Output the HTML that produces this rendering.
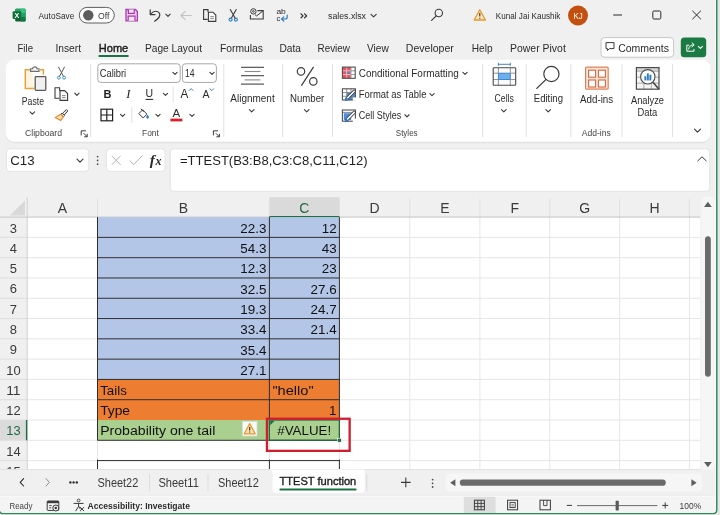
<!DOCTYPE html>
<html lang="en"><head><meta charset="utf-8"><title>sales.xlsx - Excel</title>
<style>html,body{margin:0;padding:0;background:#f0f0f0;overflow:hidden}body{width:720px;height:515px;position:relative;font-family:"Liberation Sans", sans-serif}svg{display:block;position:absolute;left:0;top:0;will-change:transform}text{font-family:"Liberation Sans", sans-serif;white-space:pre}</style>
</head><body>
<svg width="720" height="515" viewBox="0 0 720 515">
<rect x="0" y="0" width="720" height="515" fill="#f0f0f0"/>
<g id="titlebar">
<rect x="15.2" y="8.8" width="10.4" height="12.6" fill="#185c37" rx="1.2"/>
<rect x="15.2" y="8.8" width="10.4" height="4.4" fill="#21a366" rx="1.2"/>
<rect x="20.4" y="8.8" width="5.2" height="4.2" fill="#33c481" rx="1"/>
<rect x="20.4" y="13" width="5.2" height="4.2" fill="#21a366"/>
<rect x="15.2" y="13" width="5.2" height="4.2" fill="#107c41"/>
<rect x="20.4" y="17.2" width="5.2" height="4.2" fill="#107c41" rx="0.8"/>
<rect x="12.6" y="11.2" width="8.6" height="7.8" fill="#0f6e3a" rx="1"/>
<text x="16.9" y="17.7" font-size="7.2" fill="#fff" font-weight="bold" text-anchor="middle">X</text>
<text x="38.5" y="18.7" font-size="9" fill="#2b2b2b" textLength="35.8" lengthAdjust="spacingAndGlyphs">AutoSave</text>
<rect x="79.3" y="7.4" width="35" height="15.6" fill="#fdfdfd" rx="7.8" stroke="#5f5f5f" stroke-width="1"/>
<circle cx="88.3" cy="15.2" r="5.2" fill="#5d5d5d"/>
<text x="98" y="18.5" font-size="9" fill="#3a3a3a" textLength="11.4" lengthAdjust="spacingAndGlyphs">Off</text>
<path d="M126 9.5 h9.4 l2 2 v9.3 h-11.4 z" stroke="#a83cae" stroke-width="1.3" fill="#edc6ef" />
<path d="M128.4 9.5 v3.8 h5.8 v-3.8" stroke="#a83cae" stroke-width="1.2" fill="#f6e4f7" />
<path d="M128.2 20.8 v-4.6 h6.8 v4.6" stroke="#a83cae" stroke-width="1.2" fill="#f6e4f7" />
<path d="M150.2 9.8 v4.8 h4.8" stroke="#3b3b3b" stroke-width="1.2" fill="none" stroke-linecap="round" stroke-linejoin="round"/>
<path d="M150.6 14.3 C153 10.5 158 10.2 159.6 13.6 C160.6 16.2 158.5 18.6 154.6 21.2" stroke="#3b3b3b" stroke-width="1.2" fill="none" stroke-linecap="round"/>
<path d="M165.8 14.200000000000001 L168 16.400000000000002 L170.2 14.200000000000001" stroke="#3b3b3b" stroke-width="1.1" fill="none" stroke-linecap="round" stroke-linejoin="round"/>
<path d="M181 15.5 h10.5 M185.2 11.3 l-4.2 4.2 l4.2 4.2" stroke="#c2c2c2" stroke-width="1.1" fill="none" stroke-linecap="round" stroke-linejoin="round"/>
<path d="M208 12 v-2.4 h-4.4 v9.8 h4" stroke="#3b3b3b" stroke-width="1.1" fill="none" />
<path d="M208.4 12.2 h4.6 l2.8 2.8 v6.4 h-7.4 z" stroke="#3b3b3b" stroke-width="1.1" fill="#fafafa" />
<path d="M210.3 16.6 h3.6 M210.3 18.6 h3.6" stroke="#6a6a6a" stroke-width="0.8" fill="none" />
<path d="M230.3 9.5 L235.2 18.2 M236.2 9.5 L231.3 18.2" stroke="#3b3b3b" stroke-width="1.1" fill="none" stroke-linecap="round"/>
<circle cx="230.6" cy="19.6" r="1.5" fill="none" stroke="#2e7cc0" stroke-width="1.1"/>
<circle cx="235.9" cy="19.6" r="1.5" fill="none" stroke="#2e7cc0" stroke-width="1.1"/>
<path d="M257.4 10.6 h5.8 v8.4 h-12.8 v-4" stroke="#3b3b3b" stroke-width="1.1" fill="none" />
<path d="M263 10.9 l-6.4 5 l-1.6 -1.2" stroke="#3b3b3b" stroke-width="1" fill="none" />
<circle cx="253.4" cy="11.4" r="2.7" fill="none" stroke="#2b2b2b" stroke-width="0.9"/>
<circle cx="253.4" cy="11.4" r="0.9" fill="none" stroke="#2b2b2b" stroke-width="0.8"/>
<text x="276.4" y="14.4" font-size="7.8" fill="#2b2b2b" textLength="9.4" lengthAdjust="spacingAndGlyphs">ab</text>
<text x="276.4" y="21" font-size="7.8" fill="#2b2b2b">c</text>
<path d="M287.2 15.2 v1.8 q0 2 -2 2 h-3.2 M283.8 16.8 l-2.2 2.2 l2.2 2.2" stroke="#2e7cc0" stroke-width="1.2" fill="none" stroke-linecap="round" stroke-linejoin="round"/>
<path d="M301 13.9 l2 2 l-2 2 M304.6 13.9 l2 2 l-2 2" stroke="#2b2b2b" stroke-width="1.3" fill="none" stroke-linecap="round" stroke-linejoin="round"/>
<text x="328" y="18.7" font-size="9.2" fill="#2b2b2b" textLength="38" lengthAdjust="spacingAndGlyphs">sales.xlsx</text>
<path d="M371.0 14.299999999999999 L373.6 16.9 L376.20000000000005 14.299999999999999" stroke="#3b3b3b" stroke-width="1.1" fill="none" stroke-linecap="round" stroke-linejoin="round"/>
<circle cx="438.8" cy="13" r="3.7" fill="none" stroke="#3b3b3b" stroke-width="1.1"/>
<line x1="436.2" y1="15.8" x2="431.6" y2="20.4" stroke="#3b3b3b" stroke-width="1.2" stroke-linecap="round"/>
<path d="M479.8 9.8 L485.4 20 H474.2 Z" stroke="#e8972a" stroke-width="1.3" fill="#fde9c8" stroke-linejoin="round"/>
<path d="M479.8 13 v3.6 M479.8 17.8 v1" stroke="#3b2a10" stroke-width="1.1" fill="none" />
<text x="495.8" y="18.7" font-size="9" fill="#2b2b2b" textLength="64.6" lengthAdjust="spacingAndGlyphs">Kunal Jai Kaushik</text>
<circle cx="578" cy="15.5" r="10" fill="#c4500f"/>
<text x="578" y="18.8" font-size="9" fill="#fff" textLength="9.2" lengthAdjust="spacingAndGlyphs" text-anchor="middle">KJ</text>
<line x1="613.2" y1="15" x2="622" y2="15" stroke="#2b2b2b" stroke-width="1" />
<rect x="652.8" y="11" width="8" height="8" fill="none" rx="1.2" stroke="#2b2b2b" stroke-width="1"/>
<path d="M692.6 11 l8 8 M700.6 11 l-8 8" stroke="#2b2b2b" stroke-width="1" fill="none" stroke-linecap="round"/>
</g>
<g id="ribbon-tabs">
<text x="17.5" y="51.8" font-size="11" fill="#2b2b2b" textLength="15.5" lengthAdjust="spacingAndGlyphs">File</text>
<text x="55.5" y="51.8" font-size="11" fill="#2b2b2b" textLength="25.5" lengthAdjust="spacingAndGlyphs">Insert</text>
<text x="98.8" y="51.8" font-size="11" fill="#1a1a1a" textLength="29.4" lengthAdjust="spacingAndGlyphs" stroke="#1a1a1a" stroke-width="0.4">Home</text>
<rect x="98.4" y="55" width="30.4" height="1.9" fill="#1e7145" rx="0.9"/>
<text x="145" y="51.8" font-size="11" fill="#2b2b2b" textLength="57" lengthAdjust="spacingAndGlyphs">Page Layout</text>
<text x="220" y="51.8" font-size="11" fill="#2b2b2b" textLength="43" lengthAdjust="spacingAndGlyphs">Formulas</text>
<text x="279.5" y="51.8" font-size="11" fill="#2b2b2b" textLength="21.5" lengthAdjust="spacingAndGlyphs">Data</text>
<text x="317.5" y="51.8" font-size="11" fill="#2b2b2b" textLength="32.5" lengthAdjust="spacingAndGlyphs">Review</text>
<text x="367" y="51.8" font-size="11" fill="#2b2b2b" textLength="21.8" lengthAdjust="spacingAndGlyphs">View</text>
<text x="405.8" y="51.8" font-size="11" fill="#2b2b2b" textLength="48" lengthAdjust="spacingAndGlyphs">Developer</text>
<text x="471.8" y="51.8" font-size="11" fill="#2b2b2b" textLength="20.8" lengthAdjust="spacingAndGlyphs">Help</text>
<text x="510" y="51.8" font-size="11" fill="#2b2b2b" textLength="55.8" lengthAdjust="spacingAndGlyphs">Power Pivot</text>
<rect x="601" y="37.6" width="72.6" height="19.6" fill="#ffffff" rx="3.5" stroke="#c6c6c6" stroke-width="1"/>
<path d="M606 42.6 h8 v6 h-4.6 l-2 2 v-2 h-1.4 z" stroke="#3b3b3b" stroke-width="1" fill="none" stroke-linejoin="round"/>
<text x="618.2" y="51.8" font-size="11" fill="#2b2b2b" textLength="50.8" lengthAdjust="spacingAndGlyphs">Comments</text>
<rect x="680.8" y="37.4" width="25.4" height="19.8" fill="#1b7a43" rx="3.5"/>
<path d="M689.2 45.2 h-2.4 v6 h7.2 v-2.2" stroke="#fff" stroke-width="1" fill="none" />
<path d="M688.6 49 c0.6 -3 2.6 -4.2 5 -4.2 M692 42.8 l2.2 2 l-2.2 2" stroke="#fff" stroke-width="1" fill="none" stroke-linecap="round" stroke-linejoin="round"/>
<path d="M698.3 46.35 L700.4 48.449999999999996 L702.5 46.35" stroke="#fff" stroke-width="1.1" fill="none" stroke-linecap="round" stroke-linejoin="round"/>
</g>
<g id="ribbon">
<rect x="6" y="60.6" width="704.4" height="82.6" fill="#e2e2e2" rx="8"/>
<rect x="6" y="59.8" width="704.4" height="82" fill="#ffffff" rx="8"/>
<line x1="90.5" y1="64" x2="90.5" y2="137" stroke="#e2e2e2" stroke-width="1" />
<line x1="223.8" y1="64" x2="223.8" y2="137" stroke="#e2e2e2" stroke-width="1" />
<line x1="282.5" y1="64" x2="282.5" y2="137" stroke="#e2e2e2" stroke-width="1" />
<line x1="332.5" y1="64" x2="332.5" y2="137" stroke="#e2e2e2" stroke-width="1" />
<line x1="482.5" y1="64" x2="482.5" y2="137" stroke="#e2e2e2" stroke-width="1" />
<line x1="526.2" y1="64" x2="526.2" y2="137" stroke="#e2e2e2" stroke-width="1" />
<line x1="570.8" y1="64" x2="570.8" y2="137" stroke="#e2e2e2" stroke-width="1" />
<line x1="622" y1="64" x2="622" y2="137" stroke="#e2e2e2" stroke-width="1" />
<line x1="672.5" y1="64" x2="672.5" y2="137" stroke="#e2e2e2" stroke-width="1" />
<path d="M31.5 69.8 h-6.2 v18.6 h9" stroke="#e8a33a" stroke-width="1.5" fill="#fdf3e1" />
<path d="M40 69.8 h3.4 v5" stroke="#e8a33a" stroke-width="1.5" fill="none" />
<path d="M30.6 71.4 v-2.6 h2 c0 -2.6 4.4 -2.6 4.4 0 h2 v2.6 z" stroke="#6e6e6e" stroke-width="1.1" fill="#f4f4f4" />
<rect x="35.2" y="76.6" width="10.6" height="13.8" fill="#f0f0f0" rx="0.8" stroke="#5a5a5a" stroke-width="1.3"/>
<text x="21.8" y="104.5" font-size="10" fill="#2b2b2b" textLength="22.2" lengthAdjust="spacingAndGlyphs">Paste</text>
<path d="M29.999999999999996 111.85 L32.3 114.15 L34.599999999999994 111.85" stroke="#3b3b3b" stroke-width="1.1" fill="none" stroke-linecap="round" stroke-linejoin="round"/>
<path d="M58.6 67.2 L63.6 76.6 M64.4 67.2 L59.4 76.6" stroke="#555" stroke-width="1" fill="none" stroke-linecap="round"/>
<circle cx="58.9" cy="77.7" r="1.4" fill="none" stroke="#3a96dd" stroke-width="1"/>
<circle cx="64.1" cy="77.7" r="1.4" fill="none" stroke="#3a96dd" stroke-width="1"/>
<path d="M59.6 90.4 v-2.6 h-4.6 v10.4 h4.2" stroke="#3b3b3b" stroke-width="1.1" fill="none" />
<path d="M60 90.6 h4.6 l3 3 v6.8 h-7.6 z" stroke="#3b3b3b" stroke-width="1.1" fill="#fafafa" />
<path d="M62 95.6 h3.6 M62 97.6 h3.6" stroke="#6a6a6a" stroke-width="0.8" fill="none" />
<path d="M74.7 93.10000000000001 L76.9 95.3 L79.10000000000001 93.10000000000001" stroke="#3b3b3b" stroke-width="1.1" fill="none" stroke-linecap="round" stroke-linejoin="round"/>
<path d="M66.4 109.6 l1.4 1.4 l-3.6 4 l-1.8 -1.6 z" stroke="#3b3b3b" stroke-width="1" fill="#f4f4f4" stroke-linejoin="round"/>
<path d="M62 113 l2.6 2.6 l-1.2 1.2 l-2.6 -2.6 z" stroke="#3b3b3b" stroke-width="0.9" fill="#f4f4f4" />
<path d="M60.6 114.2 l2.8 2.8 l-2.6 3.4 l-5.6 -3 z" stroke="#e08a2a" stroke-width="1.1" fill="#f9dcb4" stroke-linejoin="round"/>
<text x="25" y="136.3" font-size="9.3" fill="#444444" textLength="37" lengthAdjust="spacingAndGlyphs">Clipboard</text>
<path d="M81.2 135.4 v-4.6 h4.6" stroke="#3a3a3a" stroke-width="1" fill="none" />
<path d="M83.60000000000001 133.20000000000002 l3.6 3.6 M87.2 133.8 v3 h-3" stroke="#3a3a3a" stroke-width="1" fill="none" />
<rect x="97.8" y="63.8" width="82.4" height="18.6" fill="#ffffff" rx="3" stroke="#a8a8a8" stroke-width="1"/>
<rect x="182.4" y="63.8" width="34" height="18.6" fill="#ffffff" rx="3" stroke="#a8a8a8" stroke-width="1"/>
<text x="99.8" y="76.9" font-size="10.6" fill="#2b2b2b" textLength="26.4" lengthAdjust="spacingAndGlyphs">Calibri</text>
<path d="M172.9 72.35000000000001 L175 74.45 L177.1 72.35000000000001" stroke="#3b3b3b" stroke-width="1.1" fill="none" stroke-linecap="round" stroke-linejoin="round"/>
<text x="185" y="76.9" font-size="10.6" fill="#2b2b2b" textLength="9.6" lengthAdjust="spacingAndGlyphs">14</text>
<path d="M209.9 72.35000000000001 L212 74.45 L214.1 72.35000000000001" stroke="#3b3b3b" stroke-width="1.1" fill="none" stroke-linecap="round" stroke-linejoin="round"/>
<text x="107.5" y="98" font-size="11" fill="#1f1f1f" font-weight="bold" text-anchor="middle">B</text>
<text x="128.4" y="98.2" font-size="12.6" fill="#1f1f1f" text-anchor="middle" font-style="italic" style="font-family:'Liberation Serif',serif">I</text>
<text x="149.4" y="97.4" font-size="10.5" fill="#1f1f1f" text-anchor="middle">U</text>
<line x1="145.6" y1="99.4" x2="153.2" y2="99.4" stroke="#1f1f1f" stroke-width="1" />
<path d="M163.4 93.35000000000001 L165.5 95.45 L167.6 93.35000000000001" stroke="#3b3b3b" stroke-width="1.1" fill="none" stroke-linecap="round" stroke-linejoin="round"/>
<line x1="173.2" y1="87" x2="173.2" y2="102" stroke="#e2e2e2" stroke-width="1" />
<text x="184.4" y="98" font-size="13.4" fill="#2b2b2b" textLength="7.8" lengthAdjust="spacingAndGlyphs" text-anchor="middle">A</text>
<path d="M189.4 90.4 l1.8 -1.8 l1.8 1.8" stroke="#2e7cc0" stroke-width="1" fill="none" stroke-linecap="round" stroke-linejoin="round"/>
<text x="206" y="98" font-size="10.5" fill="#2b2b2b" text-anchor="middle">A</text>
<path d="M210 88.8 l1.8 1.8 l1.8 -1.8" stroke="#2e7cc0" stroke-width="1" fill="none" stroke-linecap="round" stroke-linejoin="round"/>
<rect x="101" y="109.2" width="11.6" height="11.6" fill="none" stroke="#1f1f1f" stroke-width="1.2"/>
<path d="M106.8 109.2 v11.6 M101 115 h11.6" stroke="#1f1f1f" stroke-width="1.2" fill="none" />
<path d="M120.5 114.35000000000001 L122.6 116.45 L124.69999999999999 114.35000000000001" stroke="#3b3b3b" stroke-width="1.1" fill="none" stroke-linecap="round" stroke-linejoin="round"/>
<line x1="131.8" y1="107" x2="131.8" y2="123" stroke="#e2e2e2" stroke-width="1" />
<path d="M142.6 109.8 l4.4 4.4 l-3.8 3.8 l-4.4 -4.4 z" stroke="#3b3b3b" stroke-width="1" fill="#fafafa" stroke-linejoin="round"/>
<path d="M141 109 l2.4 2.4" stroke="#3b3b3b" stroke-width="1" fill="none" stroke-linecap="round"/>
<path d="M147.6 115 c1.4 1.8 1.4 3.4 0 3.4 c-1.4 0 -1.4 -1.6 0 -3.4 z" stroke="#2e7cc0" stroke-width="0.6" fill="#2e7cc0" />
<path d="M155.9 114.35000000000001 L158 116.45 L160.1 114.35000000000001" stroke="#3b3b3b" stroke-width="1.1" fill="none" stroke-linecap="round" stroke-linejoin="round"/>
<text x="176.4" y="117" font-size="11.5" fill="#2b2b2b" text-anchor="middle">A</text>
<rect x="170.4" y="118.6" width="12" height="2.8" fill="#d6202a"/>
<path d="M189.9 114.35000000000001 L192 116.45 L194.1 114.35000000000001" stroke="#3b3b3b" stroke-width="1.1" fill="none" stroke-linecap="round" stroke-linejoin="round"/>
<text x="142" y="136.3" font-size="9.3" fill="#444444" textLength="16.8" lengthAdjust="spacingAndGlyphs">Font</text>
<path d="M213.4 135.4 v-4.6 h4.6" stroke="#3a3a3a" stroke-width="1" fill="none" />
<path d="M215.8 133.20000000000002 l3.6 3.6 M219.4 133.8 v3 h-3" stroke="#3a3a3a" stroke-width="1" fill="none" />
<line x1="241" y1="67.3" x2="264" y2="67.3" stroke="#444444" stroke-width="1.1" />
<line x1="244.6" y1="71.5" x2="260.4" y2="71.5" stroke="#8a8a8a" stroke-width="1.1" />
<line x1="241" y1="75.7" x2="264" y2="75.7" stroke="#444444" stroke-width="1.1" />
<line x1="244.6" y1="79.9" x2="260.4" y2="79.9" stroke="#8a8a8a" stroke-width="1.1" />
<line x1="241" y1="84.1" x2="264" y2="84.1" stroke="#444444" stroke-width="1.1" />
<text x="230.3" y="101.8" font-size="10.2" fill="#2b2b2b" textLength="44.4" lengthAdjust="spacingAndGlyphs">Alignment</text>
<path d="M249.39999999999998 109.64999999999999 L251.7 111.95 L254.0 109.64999999999999" stroke="#3b3b3b" stroke-width="1.1" fill="none" stroke-linecap="round" stroke-linejoin="round"/>
<circle cx="301" cy="71.4" r="3.7" fill="none" stroke="#3b3b3b" stroke-width="1.2"/>
<circle cx="313.3" cy="81.4" r="3.7" fill="none" stroke="#3b3b3b" stroke-width="1.2"/>
<line x1="313.6" y1="66.9" x2="301.4" y2="85.7" stroke="#3b3b3b" stroke-width="1.2" />
<text x="290" y="101.8" font-size="10.2" fill="#2b2b2b" textLength="34.3" lengthAdjust="spacingAndGlyphs">Number</text>
<path d="M304.4 109.64999999999999 L306.7 111.95 L309.0 109.64999999999999" stroke="#3b3b3b" stroke-width="1.1" fill="none" stroke-linecap="round" stroke-linejoin="round"/>
<rect x="342.4" y="67.1" width="12.8" height="11.2" fill="#ffffff"/>
<rect x="342.4" y="67.1" width="8.533333333333333" height="3.733333333333333" fill="#e9525c"/>
<rect x="342.4" y="70.83333333333333" width="4.266666666666667" height="3.733333333333333" fill="#e9525c"/>
<rect x="342.4" y="74.56666666666666" width="8.533333333333333" height="3.733333333333333" fill="#e9525c"/>
<rect x="346.66666666666663" y="70.83333333333333" width="2.3466666666666667" height="3.733333333333333" fill="#3f86dc"/>
<rect x="349.0133333333333" y="70.83333333333333" width="1.92" height="3.733333333333333" fill="#e9525c"/>
<path d="M342.4 70.83333333333333 h12.8 M342.4 74.56666666666666 h12.8 M346.66666666666663 67.1 v11.2 M350.93333333333334 67.1 v11.2" stroke="#f6d4d6" stroke-width="0.7" fill="none" />
<path d="M350.93333333333334 67.1 v11.2 M350.93333333333334 70.83333333333333 h4.266666666666667 M350.93333333333334 74.56666666666666 h4.266666666666667" stroke="#8a8a8a" stroke-width="0.8" fill="none" />
<rect x="342.4" y="67.1" width="12.8" height="11.2" fill="none" stroke="#505050" stroke-width="1.1"/>
<text x="358.8" y="76.8" font-size="10" fill="#2b2b2b" textLength="100" lengthAdjust="spacingAndGlyphs">Conditional Formatting</text>
<path d="M462.9 72.35000000000001 L465 74.45 L467.1 72.35000000000001" stroke="#3b3b3b" stroke-width="1.1" fill="none" stroke-linecap="round" stroke-linejoin="round"/>
<rect x="342.4" y="88.8" width="13" height="11.2" fill="#ffffff"/>
<rect x="346.7333333333333" y="92.53333333333333" width="8.666666666666666" height="7.466666666666666" fill="#4a90e2"/>
<path d="M342.4 92.53333333333333 h13 M342.4 96.26666666666667 h13 M346.7333333333333 88.8 v11.2 M351.06666666666666 88.8 v11.2" stroke="#7a7a7a" stroke-width="0.8" fill="none" />
<rect x="342.4" y="88.8" width="13" height="11.2" fill="none" stroke="#505050" stroke-width="1.1"/>
<rect x="352.79999999999995" y="97.4" width="3.4" height="3.4" fill="#ffffff"/>
<path d="M346.59999999999997 98.8 L354.2 91.2" stroke="#3f3f3f" stroke-width="3.2" fill="none" stroke-linecap="round"/>
<path d="M347.2 98.2 L354.2 91.2" stroke="#ffffff" stroke-width="1.5" fill="none" stroke-linecap="round"/>
<path d="M344.99999999999994 100.6 l1 -3 l2.2 2 z" stroke="#2f7fd6" stroke-width="0.8" fill="#2f7fd6" stroke-linejoin="round"/>
<text x="358.8" y="98" font-size="10" fill="#2b2b2b" textLength="67.6" lengthAdjust="spacingAndGlyphs">Format as Table</text>
<path d="M429.9 93.55 L432 95.64999999999999 L434.1 93.55" stroke="#3b3b3b" stroke-width="1.1" fill="none" stroke-linecap="round" stroke-linejoin="round"/>
<rect x="342.4" y="110" width="13" height="11.2" fill="#ffffff"/>
<rect x="343.79999999999995" y="113.2" width="7.4" height="6.8" fill="#4a90e2"/>
<path d="M342.4 112.4 h13" stroke="#6a6a6a" stroke-width="0.8" fill="none" />
<rect x="342.4" y="110" width="13" height="11.2" fill="none" stroke="#505050" stroke-width="1.1"/>
<rect x="352.79999999999995" y="118.60000000000001" width="3.4" height="3.4" fill="#ffffff"/>
<path d="M346.59999999999997 120 L354.2 112.4" stroke="#3f3f3f" stroke-width="3.2" fill="none" stroke-linecap="round"/>
<path d="M347.2 119.4 L354.2 112.4" stroke="#ffffff" stroke-width="1.5" fill="none" stroke-linecap="round"/>
<path d="M344.99999999999994 121.8 l1 -3 l2.2 2 z" stroke="#2f7fd6" stroke-width="0.8" fill="#2f7fd6" stroke-linejoin="round"/>
<text x="358.8" y="119.3" font-size="10" fill="#2b2b2b" textLength="42.4" lengthAdjust="spacingAndGlyphs">Cell Styles</text>
<path d="M404.9 114.75 L407 116.85 L409.1 114.75" stroke="#3b3b3b" stroke-width="1.1" fill="none" stroke-linecap="round" stroke-linejoin="round"/>
<text x="395.8" y="136.3" font-size="9.3" fill="#444444" textLength="21.8" lengthAdjust="spacingAndGlyphs">Styles</text>
<rect x="493.2" y="67.8" width="22.5" height="17.5" fill="#fbfbfb"/>
<rect x="498.4" y="73.2" width="11.9" height="6.3" fill="#6eaeea" stroke="#2f7fd6" stroke-width="0.9"/>
<path d="M493.2 73.2 h5.2 M510.3 73.2 h5.4 M493.2 79.5 h5.2 M510.3 79.5 h5.4 M498.4 67.8 v5.4 M498.4 79.5 v5.8 M510.3 67.8 v5.4 M510.3 79.5 v5.8" stroke="#8a8a8a" stroke-width="0.9" fill="none" />
<rect x="493.2" y="67.8" width="22.5" height="17.5" fill="none" rx="0.8" stroke="#4a4a4a" stroke-width="1.1"/>
<path d="M498.4 64.3 h11.9 M498.4 62.8 v3 M510.3 62.8 v3" stroke="#2e7cc0" stroke-width="0.9" fill="none" />
<text x="494.6" y="101.8" font-size="10.2" fill="#2b2b2b" textLength="19.2" lengthAdjust="spacingAndGlyphs">Cells</text>
<path d="M501.5 109.64999999999999 L503.8 111.95 L506.1 109.64999999999999" stroke="#3b3b3b" stroke-width="1.1" fill="none" stroke-linecap="round" stroke-linejoin="round"/>
<circle cx="551.4" cy="74" r="7.6" fill="none" stroke="#3b3b3b" stroke-width="1.2"/>
<line x1="545.8" y1="79.6" x2="536.8" y2="88.4" stroke="#3b3b3b" stroke-width="1.3" stroke-linecap="round"/>
<text x="533.8" y="101.8" font-size="10.2" fill="#2b2b2b" textLength="29.2" lengthAdjust="spacingAndGlyphs">Editing</text>
<path d="M545.9000000000001 109.64999999999999 L548.2 111.95 L550.5 109.64999999999999" stroke="#3b3b3b" stroke-width="1.1" fill="none" stroke-linecap="round" stroke-linejoin="round"/>
<rect x="585.6" y="67.2" width="22.6" height="22" fill="#fbe4d8" rx="1" stroke="#e0825a" stroke-width="1.2"/>
<rect x="588.6" y="70.2" width="7" height="7" fill="#ffffff" stroke="#d2693e" stroke-width="1.1"/>
<rect x="598.4" y="70.2" width="7" height="7" fill="#ffffff" stroke="#d2693e" stroke-width="1.1"/>
<rect x="588.6" y="80" width="7" height="7" fill="#ffffff" stroke="#d2693e" stroke-width="1.1"/>
<rect x="598.4" y="80" width="7" height="7" fill="#ffffff" stroke="#d2693e" stroke-width="1.1"/>
<text x="580" y="103" font-size="10" fill="#2b2b2b" textLength="33.2" lengthAdjust="spacingAndGlyphs">Add-ins</text>
<text x="581.8" y="136.3" font-size="9.3" fill="#444444" textLength="29" lengthAdjust="spacingAndGlyphs">Add-ins</text>
<rect x="636.4" y="67.6" width="22.6" height="21.6" fill="#f4f4f4"/>
<rect x="636.4" y="67.6" width="22.6" height="3.6" fill="#d6d6d6"/>
<path d="M636.4 71.2 h22.6 M636.4 77.2 h22.6 M636.4 83.2 h22.6 M643.9 71.2 v18 M651.4 71.2 v18" stroke="#9a9a9a" stroke-width="0.8" fill="none" />
<rect x="636.4" y="67.6" width="22.6" height="21.6" fill="none" stroke="#4a4a4a" stroke-width="1.2"/>
<circle cx="647.8" cy="76.8" r="7.2" fill="#fbfbfb" stroke="#4a4a4a" stroke-width="1.1"/>
<rect x="644.4" y="76.2" width="1.9" height="4.2" fill="#2e7cc0"/>
<rect x="646.9" y="73.4" width="1.9" height="7" fill="#2e7cc0"/>
<rect x="649.4" y="74.8" width="1.9" height="5.6" fill="#2e7cc0"/>
<line x1="653" y1="82.2" x2="659" y2="89.2" stroke="#4a4a4a" stroke-width="1.7" />
<text x="631" y="103.5" font-size="10" fill="#2b2b2b" textLength="33" lengthAdjust="spacingAndGlyphs">Analyze</text>
<text x="637.5" y="116.4" font-size="10" fill="#2b2b2b" textLength="19.8" lengthAdjust="spacingAndGlyphs">Data</text>
<path d="M694.5 129.1 L697.5 132.1 L700.5 129.1" stroke="#3b3b3b" stroke-width="1.2" fill="none" stroke-linecap="round" stroke-linejoin="round"/>
</g>
<g id="formula-bar">
<rect x="6.4" y="148.8" width="82.4" height="22.6" fill="#ffffff" rx="3.5" stroke="#e3e3e3" stroke-width="1"/>
<text x="10.2" y="164.6" font-size="13.2" fill="#1f1f1f" textLength="24.4" lengthAdjust="spacingAndGlyphs">C13</text>
<path d="M77 159.1 L80 162.1 L83 159.1" stroke="#3b3b3b" stroke-width="1.2" fill="none" stroke-linecap="round" stroke-linejoin="round"/>
<circle cx="97.6" cy="156.6" r="0.85" fill="#4a4a4a"/>
<circle cx="97.6" cy="160.4" r="0.85" fill="#4a4a4a"/>
<circle cx="97.6" cy="164.2" r="0.85" fill="#4a4a4a"/>
<rect x="106.4" y="148.8" width="58.6" height="22.6" fill="#ffffff" rx="3.5" stroke="#e3e3e3" stroke-width="1"/>
<path d="M112 156 l8.4 8.6 M120.4 156 l-8.4 8.6" stroke="#b4b4b4" stroke-width="1" fill="none" stroke-linecap="round"/>
<path d="M130 160.8 l3.6 3.8 l8.6 -8.8" stroke="#b4b4b4" stroke-width="1" fill="none" stroke-linecap="round" stroke-linejoin="round"/>
<text x="149.8" y="164.8" font-size="15.5" fill="#2b2b2b" font-weight="bold" font-style="italic" style="font-family:'Liberation Serif',serif">f</text>
<text x="155.4" y="165.2" font-size="12" fill="#2b2b2b" font-weight="bold" font-style="italic" style="font-family:'Liberation Serif',serif">x</text>
<rect x="170.2" y="148.8" width="539.6" height="42.6" fill="#ffffff" rx="3.5" stroke="#e3e3e3" stroke-width="1"/>
<text x="180" y="164.9" font-size="13.2" fill="#1f1f1f" textLength="187.6" lengthAdjust="spacingAndGlyphs">=TTEST(B3:B8,C3:C8,C11,C12)</text>
<path d="M697.8 160.8 l4.2 -4 l4.2 4" stroke="#3b3b3b" stroke-width="1" fill="none" stroke-linecap="round" stroke-linejoin="round"/>
</g>
<g id="grid">
<rect x="27.2" y="217.1" width="673.0" height="252.50000000000003" fill="#ffffff"/>
<rect x="0" y="197.2" width="700.2" height="19.900000000000006" fill="#f0f0f0"/>
<rect x="0" y="217.1" width="27.2" height="252.50000000000003" fill="#f0f0f0"/>
<path d="M25 200.4 V215.4 H9.6 Z" stroke="none" stroke-width="1" fill="#d9d9d9" />
<rect x="269.4" y="197.2" width="70.0" height="19.900000000000006" fill="#dadada"/>
<rect x="0" y="420.0" width="27.2" height="20.29" fill="#dadada"/>
<line x1="27.2" y1="237.39" x2="700.2" y2="237.39" stroke="#e6e6e6" stroke-width="1" />
<line x1="27.2" y1="257.68" x2="700.2" y2="257.68" stroke="#e6e6e6" stroke-width="1" />
<line x1="27.2" y1="277.97" x2="700.2" y2="277.97" stroke="#e6e6e6" stroke-width="1" />
<line x1="27.2" y1="298.26" x2="700.2" y2="298.26" stroke="#e6e6e6" stroke-width="1" />
<line x1="27.2" y1="318.55" x2="700.2" y2="318.55" stroke="#e6e6e6" stroke-width="1" />
<line x1="27.2" y1="338.84" x2="700.2" y2="338.84" stroke="#e6e6e6" stroke-width="1" />
<line x1="27.2" y1="359.13" x2="700.2" y2="359.13" stroke="#e6e6e6" stroke-width="1" />
<line x1="27.2" y1="379.42" x2="700.2" y2="379.42" stroke="#e6e6e6" stroke-width="1" />
<line x1="27.2" y1="399.71" x2="700.2" y2="399.71" stroke="#e6e6e6" stroke-width="1" />
<line x1="27.2" y1="420.0" x2="700.2" y2="420.0" stroke="#e6e6e6" stroke-width="1" />
<line x1="27.2" y1="440.29" x2="700.2" y2="440.29" stroke="#e6e6e6" stroke-width="1" />
<line x1="27.2" y1="460.58" x2="700.2" y2="460.58" stroke="#e6e6e6" stroke-width="1" />
<line x1="97.5" y1="217.1" x2="97.5" y2="469.6" stroke="#e6e6e6" stroke-width="1" />
<line x1="269.4" y1="217.1" x2="269.4" y2="469.6" stroke="#e6e6e6" stroke-width="1" />
<line x1="339.4" y1="217.1" x2="339.4" y2="469.6" stroke="#e6e6e6" stroke-width="1" />
<line x1="409.8" y1="217.1" x2="409.8" y2="469.6" stroke="#e6e6e6" stroke-width="1" />
<line x1="479.9" y1="217.1" x2="479.9" y2="469.6" stroke="#e6e6e6" stroke-width="1" />
<line x1="549.8" y1="217.1" x2="549.8" y2="469.6" stroke="#e6e6e6" stroke-width="1" />
<line x1="619.6" y1="217.1" x2="619.6" y2="469.6" stroke="#e6e6e6" stroke-width="1" />
<line x1="689.4" y1="217.1" x2="689.4" y2="469.6" stroke="#e6e6e6" stroke-width="1" />
<line x1="97.5" y1="199" x2="97.5" y2="217.1" stroke="#e0e0e0" stroke-width="1" />
<line x1="269.4" y1="199" x2="269.4" y2="217.1" stroke="#e0e0e0" stroke-width="1" />
<line x1="339.4" y1="199" x2="339.4" y2="217.1" stroke="#e0e0e0" stroke-width="1" />
<line x1="409.8" y1="199" x2="409.8" y2="217.1" stroke="#e0e0e0" stroke-width="1" />
<line x1="479.9" y1="199" x2="479.9" y2="217.1" stroke="#e0e0e0" stroke-width="1" />
<line x1="549.8" y1="199" x2="549.8" y2="217.1" stroke="#e0e0e0" stroke-width="1" />
<line x1="619.6" y1="199" x2="619.6" y2="217.1" stroke="#e0e0e0" stroke-width="1" />
<line x1="689.4" y1="199" x2="689.4" y2="217.1" stroke="#e0e0e0" stroke-width="1" />
<line x1="0" y1="237.39" x2="27.2" y2="237.39" stroke="#dedede" stroke-width="1" />
<line x1="0" y1="257.68" x2="27.2" y2="257.68" stroke="#dedede" stroke-width="1" />
<line x1="0" y1="277.97" x2="27.2" y2="277.97" stroke="#dedede" stroke-width="1" />
<line x1="0" y1="298.26" x2="27.2" y2="298.26" stroke="#dedede" stroke-width="1" />
<line x1="0" y1="318.55" x2="27.2" y2="318.55" stroke="#dedede" stroke-width="1" />
<line x1="0" y1="338.84" x2="27.2" y2="338.84" stroke="#dedede" stroke-width="1" />
<line x1="0" y1="359.13" x2="27.2" y2="359.13" stroke="#dedede" stroke-width="1" />
<line x1="0" y1="379.42" x2="27.2" y2="379.42" stroke="#dedede" stroke-width="1" />
<line x1="0" y1="399.71" x2="27.2" y2="399.71" stroke="#dedede" stroke-width="1" />
<line x1="0" y1="420.0" x2="27.2" y2="420.0" stroke="#dedede" stroke-width="1" />
<line x1="0" y1="440.29" x2="27.2" y2="440.29" stroke="#dedede" stroke-width="1" />
<line x1="0" y1="460.58" x2="27.2" y2="460.58" stroke="#dedede" stroke-width="1" />
<line x1="0" y1="217.1" x2="700.2" y2="217.1" stroke="#c4c4c4" stroke-width="1" />
<line x1="27.2" y1="197.2" x2="27.2" y2="469.6" stroke="#d0d0d0" stroke-width="1" />
<text x="62.4" y="212.6" font-size="14" fill="#3a3a3a" text-anchor="middle">A</text>
<text x="183.4" y="212.6" font-size="14" fill="#3a3a3a" text-anchor="middle">B</text>
<text x="304.4" y="212.6" font-size="14" fill="#1e6b41" text-anchor="middle">C</text>
<text x="374.6" y="212.6" font-size="14" fill="#3a3a3a" text-anchor="middle">D</text>
<text x="444.9" y="212.6" font-size="14" fill="#3a3a3a" text-anchor="middle">E</text>
<text x="514.8" y="212.6" font-size="14" fill="#3a3a3a" text-anchor="middle">F</text>
<text x="584.7" y="212.6" font-size="14" fill="#3a3a3a" text-anchor="middle">G</text>
<text x="654.5" y="212.6" font-size="14" fill="#3a3a3a" text-anchor="middle">H</text>
<text x="13.4" y="232.5" font-size="13.6" fill="#3a3a3a" textLength="7.2" lengthAdjust="spacingAndGlyphs" text-anchor="middle">3</text>
<text x="13.4" y="252.8" font-size="13.6" fill="#3a3a3a" textLength="7.2" lengthAdjust="spacingAndGlyphs" text-anchor="middle">4</text>
<text x="13.4" y="273.1" font-size="13.6" fill="#3a3a3a" textLength="7.2" lengthAdjust="spacingAndGlyphs" text-anchor="middle">5</text>
<text x="13.4" y="293.4" font-size="13.6" fill="#3a3a3a" textLength="7.2" lengthAdjust="spacingAndGlyphs" text-anchor="middle">6</text>
<text x="13.4" y="313.7" font-size="13.6" fill="#3a3a3a" textLength="7.2" lengthAdjust="spacingAndGlyphs" text-anchor="middle">7</text>
<text x="13.4" y="333.9" font-size="13.6" fill="#3a3a3a" textLength="7.2" lengthAdjust="spacingAndGlyphs" text-anchor="middle">8</text>
<text x="13.4" y="354.2" font-size="13.6" fill="#3a3a3a" textLength="7.2" lengthAdjust="spacingAndGlyphs" text-anchor="middle">9</text>
<text x="13.4" y="374.5" font-size="13.6" fill="#3a3a3a" textLength="14.4" lengthAdjust="spacingAndGlyphs" text-anchor="middle">10</text>
<text x="13.4" y="394.8" font-size="13.6" fill="#3a3a3a" textLength="14.4" lengthAdjust="spacingAndGlyphs" text-anchor="middle">11</text>
<text x="13.4" y="415.1" font-size="13.6" fill="#3a3a3a" textLength="14.4" lengthAdjust="spacingAndGlyphs" text-anchor="middle">12</text>
<text x="13.4" y="435.4" font-size="13.6" fill="#1e6b41" textLength="14.4" lengthAdjust="spacingAndGlyphs" text-anchor="middle">13</text>
<text x="13.4" y="455.7" font-size="13.6" fill="#3a3a3a" textLength="14.4" lengthAdjust="spacingAndGlyphs" text-anchor="middle">14</text>
<text x="13.4" y="476.0" font-size="13.6" fill="#3a3a3a" textLength="14.4" lengthAdjust="spacingAndGlyphs" text-anchor="middle">15</text>
<line x1="269.4" y1="216.7" x2="339.4" y2="216.7" stroke="#1e7145" stroke-width="1.4" />
<line x1="26.599999999999998" y1="420.0" x2="26.599999999999998" y2="440.29" stroke="#1e7145" stroke-width="1.4" />
<rect x="97.5" y="217.1" width="241.89999999999998" height="162.32000000000002" fill="#b4c6e7"/>
<rect x="97.5" y="379.42" width="241.89999999999998" height="40.579999999999984" fill="#ed7d31"/>
<rect x="97.5" y="420.0" width="241.89999999999998" height="20.29" fill="#a9d08e"/>
<line x1="97.5" y1="237.39" x2="339.4" y2="237.39" stroke="#2e2e2e" stroke-width="1" />
<line x1="97.5" y1="257.68" x2="339.4" y2="257.68" stroke="#2e2e2e" stroke-width="1" />
<line x1="97.5" y1="277.97" x2="339.4" y2="277.97" stroke="#2e2e2e" stroke-width="1" />
<line x1="97.5" y1="298.26" x2="339.4" y2="298.26" stroke="#2e2e2e" stroke-width="1" />
<line x1="97.5" y1="318.55" x2="339.4" y2="318.55" stroke="#2e2e2e" stroke-width="1" />
<line x1="97.5" y1="338.84" x2="339.4" y2="338.84" stroke="#2e2e2e" stroke-width="1" />
<line x1="97.5" y1="359.13" x2="339.4" y2="359.13" stroke="#2e2e2e" stroke-width="1" />
<line x1="97.5" y1="379.42" x2="339.4" y2="379.42" stroke="#2e2e2e" stroke-width="1" />
<line x1="97.5" y1="399.71" x2="339.4" y2="399.71" stroke="#2e2e2e" stroke-width="1" />
<line x1="97.5" y1="440.29" x2="339.4" y2="440.29" stroke="#2e2e2e" stroke-width="1" />
<line x1="97.5" y1="217.1" x2="97.5" y2="440.29" stroke="#2e2e2e" stroke-width="1" />
<line x1="269.4" y1="217.1" x2="269.4" y2="440.29" stroke="#2e2e2e" stroke-width="1" />
<line x1="339.4" y1="217.1" x2="339.4" y2="440.29" stroke="#2e2e2e" stroke-width="1" />
<line x1="97.0" y1="460.58" x2="339.9" y2="460.58" stroke="#2e2e2e" stroke-width="1" />
<line x1="97.5" y1="459.58" x2="97.5" y2="469.6" stroke="#2e2e2e" stroke-width="1" />
<line x1="269.4" y1="459.58" x2="269.4" y2="469.6" stroke="#2e2e2e" stroke-width="1" />
<line x1="339.4" y1="459.58" x2="339.4" y2="469.6" stroke="#2e2e2e" stroke-width="1" />
<text x="266.4" y="232.8" font-size="13.7" fill="#111111" textLength="26.1" lengthAdjust="spacingAndGlyphs" text-anchor="end">22.3</text>
<text x="266.4" y="253.1" font-size="13.7" fill="#111111" textLength="26.1" lengthAdjust="spacingAndGlyphs" text-anchor="end">54.3</text>
<text x="266.4" y="273.4" font-size="13.7" fill="#111111" textLength="26.1" lengthAdjust="spacingAndGlyphs" text-anchor="end">12.3</text>
<text x="266.4" y="293.7" font-size="13.7" fill="#111111" textLength="26.1" lengthAdjust="spacingAndGlyphs" text-anchor="end">32.5</text>
<text x="266.4" y="314.0" font-size="13.7" fill="#111111" textLength="26.1" lengthAdjust="spacingAndGlyphs" text-anchor="end">19.3</text>
<text x="266.4" y="334.2" font-size="13.7" fill="#111111" textLength="26.1" lengthAdjust="spacingAndGlyphs" text-anchor="end">33.4</text>
<text x="266.4" y="354.5" font-size="13.7" fill="#111111" textLength="26.1" lengthAdjust="spacingAndGlyphs" text-anchor="end">35.4</text>
<text x="266.4" y="374.8" font-size="13.7" fill="#111111" textLength="26.1" lengthAdjust="spacingAndGlyphs" text-anchor="end">27.1</text>
<text x="336.6" y="232.8" font-size="13.7" fill="#111111" textLength="14.9" lengthAdjust="spacingAndGlyphs" text-anchor="end">12</text>
<text x="336.6" y="253.1" font-size="13.7" fill="#111111" textLength="14.9" lengthAdjust="spacingAndGlyphs" text-anchor="end">43</text>
<text x="336.6" y="273.4" font-size="13.7" fill="#111111" textLength="14.9" lengthAdjust="spacingAndGlyphs" text-anchor="end">23</text>
<text x="336.6" y="293.7" font-size="13.7" fill="#111111" textLength="26.1" lengthAdjust="spacingAndGlyphs" text-anchor="end">27.6</text>
<text x="336.6" y="314.0" font-size="13.7" fill="#111111" textLength="26.1" lengthAdjust="spacingAndGlyphs" text-anchor="end">24.7</text>
<text x="336.6" y="334.2" font-size="13.7" fill="#111111" textLength="26.1" lengthAdjust="spacingAndGlyphs" text-anchor="end">21.4</text>
<text x="100.2" y="394.7" font-size="13.7" fill="#111111" textLength="26.6" lengthAdjust="spacingAndGlyphs">Tails</text>
<text x="100.2" y="415.0" font-size="13.7" fill="#111111" textLength="29.8" lengthAdjust="spacingAndGlyphs">Type</text>
<text x="100.2" y="435.3" font-size="13.7" fill="#111111" textLength="115.2" lengthAdjust="spacingAndGlyphs">Probability one tail</text>
<text x="272.4" y="394.7" font-size="13.7" fill="#111111" textLength="41.2" lengthAdjust="spacingAndGlyphs">"hello"</text>
<text x="336.4" y="415.2" font-size="13.7" fill="#111111" textLength="7.45" lengthAdjust="spacingAndGlyphs" text-anchor="end">1</text>
<text x="304.2" y="435.3" font-size="13.7" fill="#111111" textLength="53.8" lengthAdjust="spacingAndGlyphs" text-anchor="middle">#VALUE!</text>
<rect x="242.4" y="421.4" width="14.6" height="14.6" fill="#fbfbfb" stroke="#d8d8d8" stroke-width="0.8"/>
<path d="M249.7 423.6 L255.2 433.8 H244.2 Z" stroke="#e8972a" stroke-width="1.2" fill="#fde3b4" stroke-linejoin="round"/>
<path d="M249.7 427 v3.4 M249.7 431.4 v1" stroke="#3b2a10" stroke-width="1.1" fill="none" />
<rect x="269.4" y="420.0" width="70.0" height="20.29" fill="none" stroke="#24683f" stroke-width="1.2"/>
<path d="M270.2 420.8 h4.4 l-4.4 4.4 z" stroke="none" stroke-width="1" fill="#1e6b41" />
<rect x="337.5" y="438.39000000000004" width="3.8" height="3.8" fill="#1e6b41" stroke="#ffffff" stroke-width="0.6"/>
<rect x="266.95" y="418.75" width="82.7" height="32.1" fill="none" stroke="#cf1f2e" stroke-width="2.3"/>
</g>
<g id="vscroll">
<rect x="701.2" y="196.6" width="13.6" height="274" fill="#f6f6f6" rx="5"/>
<path d="M704 207 L707.9 201.8 L711.8 207 Z" stroke="none" stroke-width="1" fill="#5e5e5e" />
<rect x="705" y="236.3" width="5.8" height="140.4" fill="#6a6a6a" rx="2.9"/>
<path d="M704 462 L707.9 467.2 L711.8 462 Z" stroke="none" stroke-width="1" fill="#5e5e5e" />
</g>
<g id="sheet-tabs">
<rect x="0" y="469.6" width="716" height="26.4" fill="#f0f0f0"/>
<rect x="0" y="496" width="716" height="18" fill="#f4f4f4"/>
<line x1="0" y1="495.3" x2="716" y2="495.3" stroke="#ebebeb" stroke-width="1" />
<line x1="0" y1="496.4" x2="716" y2="496.4" stroke="#f9f9f9" stroke-width="1" />
<line x1="0" y1="469.6" x2="700.2" y2="469.6" stroke="#e2e2e2" stroke-width="1" />
<path d="M23.6 478.6 l-3.4 3.7 l3.4 3.7" stroke="#2b2b2b" stroke-width="1.1" fill="none" stroke-linecap="round" stroke-linejoin="round"/>
<path d="M46 478.6 l3.4 3.7 l-3.4 3.7" stroke="#8a8a8a" stroke-width="1" fill="none" stroke-linecap="round" stroke-linejoin="round"/>
<circle cx="70.4" cy="482.4" r="1.2" fill="#2b2b2b"/>
<circle cx="73.6" cy="482.4" r="1.2" fill="#2b2b2b"/>
<circle cx="76.8" cy="482.4" r="1.2" fill="#2b2b2b"/>
<text x="97.5" y="487.4" font-size="11.9" fill="#3a3a3a" textLength="40.8" lengthAdjust="spacingAndGlyphs">Sheet22</text>
<line x1="149.6" y1="474" x2="149.6" y2="491" stroke="#dcdcdc" stroke-width="1" />
<text x="158.4" y="487.4" font-size="11.9" fill="#3a3a3a" textLength="40.4" lengthAdjust="spacingAndGlyphs">Sheet11</text>
<line x1="208" y1="474" x2="208" y2="491" stroke="#dcdcdc" stroke-width="1" />
<text x="218" y="487.4" font-size="11.9" fill="#3a3a3a" textLength="40.8" lengthAdjust="spacingAndGlyphs">Sheet12</text>
<path d="M268.6 469.6 H364.6 V489 Q364.6 493 360.6 493 H276.6 Q272.6 493 272.6 489 V473 Q272.6 469.8 268.6 469.6 Z" stroke="none" stroke-width="1" fill="#ffffff" />
<text x="279.5" y="485.2" font-size="11.4" fill="#1f1f1f" textLength="76.8" lengthAdjust="spacingAndGlyphs" stroke="#1f1f1f" stroke-width="0.4">TTEST function</text>
<rect x="279.4" y="488.4" width="77.2" height="2" fill="#1e7145" rx="1"/>
<path d="M401 482.4 h9.6 M405.8 477.6 v9.6" stroke="#3b3b3b" stroke-width="1.1" fill="none" />
<circle cx="432.6" cy="479.6" r="0.9" fill="#4a4a4a"/>
<circle cx="432.6" cy="483.3" r="0.9" fill="#4a4a4a"/>
<circle cx="432.6" cy="487" r="0.9" fill="#4a4a4a"/>
<rect x="445.6" y="473.6" width="256.6" height="18" fill="#f6f6f6" rx="5"/>
<line x1="366.8" y1="474" x2="366.8" y2="491" stroke="#dcdcdc" stroke-width="1" />
<path d="M455.4 479.2 L450.2 482.7 L455.4 486.2 Z" stroke="none" stroke-width="1" fill="#5e5e5e" />
<rect x="459.8" y="479.6" width="206" height="6.2" fill="#6a6a6a" rx="3.1"/>
<path d="M691.4 479.2 L696.6 482.7 L691.4 486.2 Z" stroke="none" stroke-width="1" fill="#5e5e5e" />
</g>
<g id="status-bar">
<text x="9.4" y="509.2" font-size="9" fill="#444" textLength="23" lengthAdjust="spacingAndGlyphs">Ready</text>
<rect x="47.2" y="501" width="11.6" height="9.4" fill="none" rx="0.8" stroke="#3b3b3b" stroke-width="1"/>
<rect x="47.2" y="501" width="11.6" height="2.2" fill="#3b3b3b"/>
<circle cx="55.8" cy="508" r="3" fill="#f4f4f4" stroke="#3b3b3b" stroke-width="1"/>
<circle cx="55.8" cy="508" r="1.3" fill="#3b3b3b"/>
<path d="M49.2 505.6 h2.6 M49.2 507.8 h2" stroke="#3b3b3b" stroke-width="0.9" fill="none" />
<circle cx="78.6" cy="500.4" r="1.4" fill="none" stroke="#3b3b3b" stroke-width="0.9"/>
<path d="M74 503.4 h9.2 M78.6 503.4 v3 M78.6 506.4 l-2.8 4.4 M78.6 506.4 l1.6 2.4" stroke="#3b3b3b" stroke-width="1" fill="none" stroke-linecap="round"/>
<path d="M80.4 507.4 l3.4 3.4 M83.8 507.4 l-3.4 3.4" stroke="#3b3b3b" stroke-width="1" fill="none" stroke-linecap="round"/>
<text x="87.6" y="509.2" font-size="9" fill="#2b2b2b" textLength="102.4" lengthAdjust="spacingAndGlyphs" font-weight="bold">Accessibility: Investigate</text>
<rect x="463.8" y="496.8" width="31.8" height="16.4" fill="#dedede"/>
<rect x="474.4" y="500.2" width="10" height="9.6" fill="none" stroke="#3b3b3b" stroke-width="1"/>
<path d="M474.4 503.4 h10 M474.4 506.59999999999997 h10 M477.79999999999995 500.2 v9.6 M481.09999999999997 500.2 v9.6" stroke="#3b3b3b" stroke-width="0.9" fill="none" />
<rect x="507.6" y="500.2" width="10" height="9.6" fill="none" stroke="#3b3b3b" stroke-width="1"/>
<rect x="510" y="502.4" width="5.2" height="5.2" fill="none" stroke="#3b3b3b" stroke-width="0.9"/>
<path d="M511.4 504.4 h2.4 M511.4 506 h2.4" stroke="#3b3b3b" stroke-width="0.6" fill="none" />
<rect x="540" y="500.2" width="10.4" height="9.6" fill="none" stroke="#3b3b3b" stroke-width="1"/>
<path d="M543.6 500.2 v5.4 h3.4 v-5.4" stroke="#3b3b3b" stroke-width="0.9" fill="none" />
<line x1="566.8" y1="505.4" x2="572" y2="505.4" stroke="#3b3b3b" stroke-width="1" />
<line x1="577" y1="505.6" x2="657.4" y2="505.6" stroke="#6a6a6a" stroke-width="1" />
<rect x="615.6" y="500.8" width="3.2" height="9.6" fill="#5a5a5a" rx="0.6"/>
<path d="M662.2 505.4 h6 M665.2 502.4 v6" stroke="#3b3b3b" stroke-width="1" fill="none" />
<text x="679.6" y="509.2" font-size="9" fill="#3a3a3a" textLength="21.6" lengthAdjust="spacingAndGlyphs">100%</text>
</g>
<g id="window-frame">
<rect x="718" y="0" width="2" height="515" fill="#e4e6e4"/>
<rect x="715" y="0" width="1.1" height="509" fill="#fafafa"/>
<path d="M716.8 0 L716.8 509.8 Q716.8 513.8 712.8 513.8 L3 513.8 Q0.6 513.6 0 511.6" stroke="#2f8a5a" stroke-width="1.5" fill="none" />
<rect x="0" y="514.4" width="720" height="0.6" fill="#e4e6e4"/>
</g>
</svg></body></html>
